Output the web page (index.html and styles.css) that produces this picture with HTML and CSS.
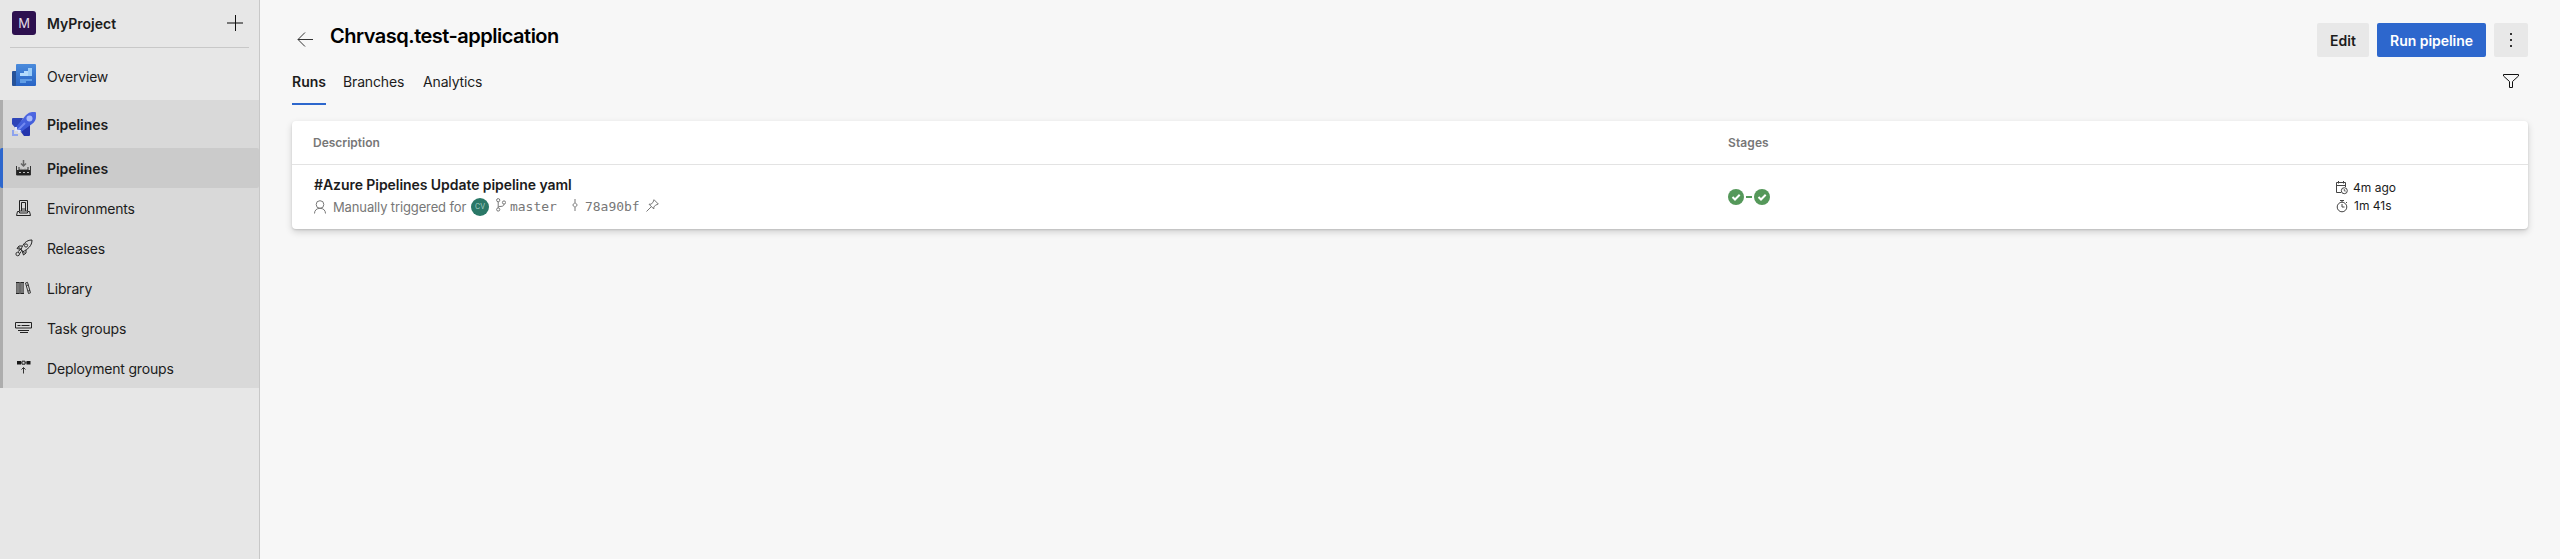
FILE: index.html
```html
<!DOCTYPE html>
<html lang="en">
<head>
<meta charset="utf-8">
<title>Chrvasq.test-application</title>
<link rel="stylesheet" href="styles.css">
</head>
<body>
<aside class="sidebar">
  <div class="project">
    <span class="project-avatar">M</span>
    <span class="project-name">MyProject</span>
    <svg class="plus" width="16" height="16" viewBox="0 0 16 16"><path d="M0 8h16" stroke="#777" stroke-width="2"/><path d="M8.500 0v16" stroke="#111"/></svg>
  </div>
  <a class="nav-item overview">
    <svg class="hub-icon" width="24" height="24" viewBox="0 0 24 24">
      <defs><linearGradient id="ov" x2="0" y2="1"><stop stop-color="#4a8bdc"/><stop offset="1" stop-color="#2864c5"/></linearGradient></defs>
      <path d="M1 8h4v15H1a1 1 0 0 1-1-1V9a1 1 0 0 1 1-1z" fill="#265299"/>
      <path d="M5 1h18a1 1 0 0 1 1 1v20a1 1 0 0 1-1 1H3a1 1 0 0 0 1-1V2a1 1 0 0 1 1-1z" fill="url(#ov)"/>
      <path d="M8 10h4V8h4V5h4v8H8z" fill="#b5dcfc"/><path d="M16 5h4v8h-4z" fill="#9bcdf8"/>
      <path d="M8 16h12v2h-6v2H8z" fill="#609de5"/>
    </svg>
    <span>Overview</span>
  </a>
  <nav class="nav-group">
    <a class="nav-item hub">
      <svg class="hub-icon" width="24" height="24" viewBox="0 0 24 24">
        <defs><linearGradient id="rk" x2="0" y2="1"><stop stop-color="#5068e2"/><stop offset="1" stop-color="#3857d5"/></linearGradient></defs>
        <path d="M1 6h10L5 18 0 12V7a1 1 0 0 1 1-1z" fill="#2e45b8"/><path d="M9 20l9-10v13a1 1 0 0 1-1 1h-5z" fill="#2435ad"/>
        <path d="M4 15 14 3q3-3 6-3h3a1 1 0 0 1 1 1v4q0 4-4 7L9 20z" fill="url(#rk)"/>
        <circle cx="17.500" cy="6.500" r="3" fill="#a8b9fb"/><path d="M6 18l7-7" stroke="#738af1" stroke-width="2"/>
        <path d="M0 18h2v4h4v2H0z" fill="#8ea3ee"/><path d="M3 15h2v3h4l-1 3H6v-2H3z" fill="#dfe5fb"/>
      </svg>
      <span>Pipelines</span>
    </a>
    <a class="nav-item selected">
      <svg class="nav-icon" width="16" height="16" viewBox="0 0 16 16"><path d="M7.500 0v6M5 3.500 7.500 6 10 3.500" fill="none" stroke="#666" stroke-width="1.500"/><path d="M.5 6v9h14V6M3 7v3h9V7" fill="none" stroke="#333"/><path d="M1 10h13v5H1z" fill="#222"/><path d="M4 8.500h2m2 0h2M3 12.500h2m2 0h2m2 0h2" stroke="#bbb"/></svg>
      <span>Pipelines</span>
    </a>
    <a class="nav-item">
      <svg class="nav-icon" width="16" height="16" viewBox="0 0 16 16"><path d="M3.500 11V.5h8V11M5.500 11V2.500h4V11M.5 15.500l1-4h2v1.500h8v-1.500h2l1 4z" fill="none" stroke="#222"/><path d="M6 9h3M4 11h7" stroke="#333"/></svg>
      <span>Environments</span>
    </a>
    <a class="nav-item">
      <svg class="nav-icon" width="18" height="18" viewBox="0 0 18 18"><path d="M6 10.500C8 5 11 1 17 1c0 6-4 9-9.500 12zM7 7H4L2 9.500l4 1M11 11v3l-2.500 2L7.500 13M3.500 8l6.500 6.500" fill="none" stroke="#222"/><circle cx="11" cy="6.500" r="1.600" fill="none" stroke="#333"/><circle cx="2.700" cy="15" r="1.800" fill="none" stroke="#333"/><path d="M3 12.500l2-1.500M5 14.500l1-2" stroke="#333"/></svg>
      <span>Releases</span>
    </a>
    <a class="nav-item">
      <svg class="nav-icon" width="16" height="14" viewBox="0 0 16 14"><path d="M.5 1h7v12h-7z" fill="#777"/><path d="M0 1.500h3.500m1 0H8M0 12.500h3.500m1 0H8" stroke="#222"/><path d="M.5 2v10M4 2v10M7.500 2v10" stroke="#555" stroke-width=".8"/><path d="m9.500 2 2-.7 3 10.500-2 .7zM10.500 4.500l2-.5M12 10l2-.5" fill="none" stroke="#333"/></svg>
      <span>Library</span>
    </a>
    <a class="nav-item">
      <svg class="nav-icon" width="18" height="12" viewBox="0 0 18 12"><path d="M.5 6V.5h16V6zM3 8.500h11M5 10.500h8" fill="none" stroke="#222"/><path d="M2.500 3.500h3m1 0h8" stroke="#222"/></svg>
      <span>Task groups</span>
    </a>
    <a class="nav-item">
      <svg class="nav-icon lift" width="16" height="14" viewBox="0 0 16 14"><path d="M1 1h4v3.500H1zm9.500 0h4v3.500h-4z" fill="#181818"/><path d="M5 2.800h6" stroke="#444"/><path d="M6 1.200h3v3H6z" fill="#d9d9d9" stroke="#222"/><path d="M7.500 13.500V7.500M5.500 9.500l2-2 2 2" fill="none" stroke="#333"/></svg>
      <span>Deployment groups</span>
    </a>
  </nav>
</aside>
<main class="main">
  <header class="header">
    <svg class="back" width="16" height="15" viewBox="0 0 16 15"><path d="M8 .5 1 7.500l7 7M1 7.500h15" fill="none" stroke="#333"/></svg>
    <h1>Chrvasq.test-application</h1>
    <div class="actions">
      <button class="btn edit">Edit</button>
      <button class="btn primary">Run pipeline</button>
      <button class="btn more"><svg width="2" height="14" viewBox="0 0 2 14"><path d="M0 0h2v2H0zm0 6h2v2H0zm0 6h2v2H0z" fill="#333"/></svg></button>
    </div>
  </header>
  <div class="tabs">
    <a class="tab active">Runs</a><a class="tab branches">Branches</a><a class="tab analytics">Analytics</a>
    <svg class="filter" width="16" height="14" viewBox="0 0 16 14"><path d="M.5.500h15V2L9.500 7.500v6h-3v-6L.5 2z" fill="none" stroke="#111"/></svg>
  </div>
  <section class="card">
    <div class="row head"><span class="h-desc">Description</span><span class="h-stages">Stages</span></div>
    <div class="row run">
      <div class="description">
        <div class="run-title">#Azure Pipelines Update pipeline yaml</div>
        <div class="run-meta">
          <svg class="person" width="12" height="14" viewBox="0 0 12 14"><circle cx="6" cy="4.500" r="3.800" fill="none" stroke="#777"/><path d="M.5 13.500c0-3 2-5.200 5.500-5.200s5.500 2.200 5.500 5.200" fill="none" stroke="#777"/></svg>
          <span class="trigger">Manually triggered for</span>
          <span class="avatar">CV</span>
          <svg class="branch" width="10" height="14" viewBox="0 0 10 14"><g fill="none" stroke="#777"><circle cx="2.200" cy="2.200" r="1.600"/><circle cx="2.200" cy="11.500" r="1.600"/><circle cx="8" cy="4.500" r="1.600"/><path d="M2.200 4v6M8 6c0 2.200-1.500 2.500-5.500 2.500"/></g></svg>
          <span class="mono master">master</span>
          <svg class="commit" width="6" height="14" viewBox="0 0 6 14"><path d="M3 1v3.500M3 9.500V13M3 4.500l2.300 2.500L3 9.500.7 7z" fill="none" stroke="#777"/></svg>
          <span class="mono hash">78a90bf</span>
          <svg class="pin" width="13" height="13" viewBox="0 0 13 13"><path d="M8 .7 12.300 5 9.500 6.200 7.800 8v2L3 5.200h2L7 3.400zM5.300 7.700.5 12.500" fill="none" stroke="#777"/></svg>
        </div>
      </div>
      <div class="stages">
        <svg width="16" height="16" viewBox="0 0 16 16"><circle cx="8" cy="8" r="8" fill="#55985a"/><path d="m4.500 8 2.500 2.500 4.700-4.700" fill="none" stroke="#fff" stroke-width="2"/></svg>
        <i class="link"></i>
        <svg width="16" height="16" viewBox="0 0 16 16"><circle cx="8" cy="8" r="8" fill="#55985a"/><path d="m4.500 8 2.500 2.500 4.700-4.700" fill="none" stroke="#fff" stroke-width="2"/></svg>
      </div>
      <div class="times">
        <div class="time"><svg width="14" height="14" viewBox="0 0 14 14"><path d="M6 11.500H1.500v-10h9V6M1.500 4.500h9M3.500 0v2.500M8.500 0v2.500" fill="none" stroke="#444"/><circle cx="9.300" cy="9.700" r="3" fill="#fff" stroke="#444"/><path d="M9.300 8v2h1.500" fill="none" stroke="#444" stroke-width=".8"/></svg><span>4m ago</span></div>
        <div class="time"><svg width="14" height="14" viewBox="0 0 14 14"><circle cx="7" cy="8" r="4.800" fill="none" stroke="#444"/><path d="M5 1.500h4M7 5v3h2.500M11 3l1 1M7 1.500V3" fill="none" stroke="#444"/></svg><span class="duration">1m 41s</span></div>
      </div>
    </div>
  </section>
</main>
</body>
</html>
```
FILE: styles.css
```css
* { box-sizing: border-box; }
body { margin: 0; height: 559px; display: flex; overflow: hidden; background: #f7f7f7; color: #1c1c1c; font: 14px/20px Inter, "Liberation Sans", sans-serif; }
svg { flex: none; display: block; }
span { white-space: nowrap; }
.sidebar { width: 260px; height: 559px; background: #e7e7e7; border-right: 1px solid #c8c8c8; flex: none; }
.project { height: 48px; margin: 0 10px; padding: 0 6px 1px 2px; border-bottom: 1px solid #c8c8c8; display: flex; align-items: center; }
.project-avatar { width: 24px; height: 24px; border-radius: 3px; background: #2d104f; color: #e1dbe8; text-align: center; line-height: 24px; font-size: 13px; }
.project-name { margin-left: 11px; padding-top: 2px; font-weight: 600; }
.plus { margin-left: auto; }
.nav-item { height: 40px; padding-left: 12px; display: flex; align-items: center; letter-spacing: -.18px; }
.nav-item span { padding-top: 2px; }
.overview { height: 52px; padding-top: 4px; }
.overview .hub-icon { margin-top: -3px; }
.hub-icon { margin-right: 11px; }
.nav-group { background: #d9d9d9; border-left: 3px solid #adadad; }
.nav-group .nav-item { padding-left: 9px; }
.nav-group .hub { height: 48px; font-weight: 600; letter-spacing: -.05px; }
.nav-icon { width: 24px; margin-right: 11px; }
.lift { margin-bottom: 2px; }
.nav-group .selected { margin-left: -3px; border-left: 3px solid #2d67cd; border-radius: 2px; background: #cbcbcb; font-weight: 600; letter-spacing: -.05px; }
.main { flex: 1; padding: 0 32px; }
.header { display: flex; height: 68px; padding-top: 23px; align-items: flex-start; }
.back { margin: 9px 0 0 5px; }
h1 { margin: -1px 0 0 17px; font-size: 20px; line-height: 28px; font-weight: 600; letter-spacing: -.5px; color: #000; }
.actions { margin-left: auto; display: flex; gap: 8px; }
.btn { height: 34px; padding: 2px 0 0; border: 0; border-radius: 2px; background: #e8e8e8; color: #1c1c1c; font: 600 14px/20px Inter, sans-serif; display: flex; align-items: center; justify-content: center; }
.edit { width: 52px; }
.primary { width: 109px; background: #2d67cd; color: #fff; letter-spacing: -.05px; }
.more { width: 34px; padding-top: 0; }
.tabs { display: flex; height: 53px; }
.tab { height: 37px; padding-top: 4px; letter-spacing: -.15px; }
.active { width: 34px; margin-right: 17px; font-weight: 600; letter-spacing: 0; border-bottom: 2px solid #2d67cd; }
.branches { width: 80px; }
.filter { margin: 6px 9px 0 auto; }
.card { height: 108px; background: #fff; border-radius: 4px; box-shadow: 0 3px 7px rgba(0,0,0,.16), 0 1px 2px rgba(0,0,0,.12); }
.row { display: grid; grid-template-columns: 1436px 607px 1fr; }
.head { height: 44px; border-bottom: 1px solid #e3e3e3; color: #777; font-size: 12px; font-weight: 600; line-height: 43px; }
.h-desc { padding-left: 21px; }
.h-stages { letter-spacing: .1px; }
.run { height: 64px; }
.description { padding: 10px 0 0 22px; }
.run-title { font-weight: 600; line-height: 20px; letter-spacing: -.06px; }
.run-meta { display: flex; align-items: center; height: 23px; color: #777; font-size: 13px; }
.trigger { margin-left: 7px; width: 138px; letter-spacing: -.13px; }
.avatar { width: 18px; height: 18px; border-radius: 50%; background: #2a7867; color: #a8cfc5; font-size: 7px; line-height: 18px; text-align: center; }
.branch { margin: -4px 4px 0 7px; }
.mono { font: 13px/20px "DejaVu Sans Mono", monospace; letter-spacing: -.02px; }
.master { width: 62px; }
.commit { margin: -4px 7px 0 0; }
.hash { width: 61px; }
.pin { margin-top: -3px; }
.stages { display: flex; align-items: center; height: 64px; }
.link { width: 6px; height: 2px; margin: 0 2px; background: #55985a; }
.times { padding-top: 14px; }
.time { height: 18px; display: flex; align-items: center; gap: 4px; font-size: 12px; line-height: 18px; }
.duration { padding-left: 1px; }
```
